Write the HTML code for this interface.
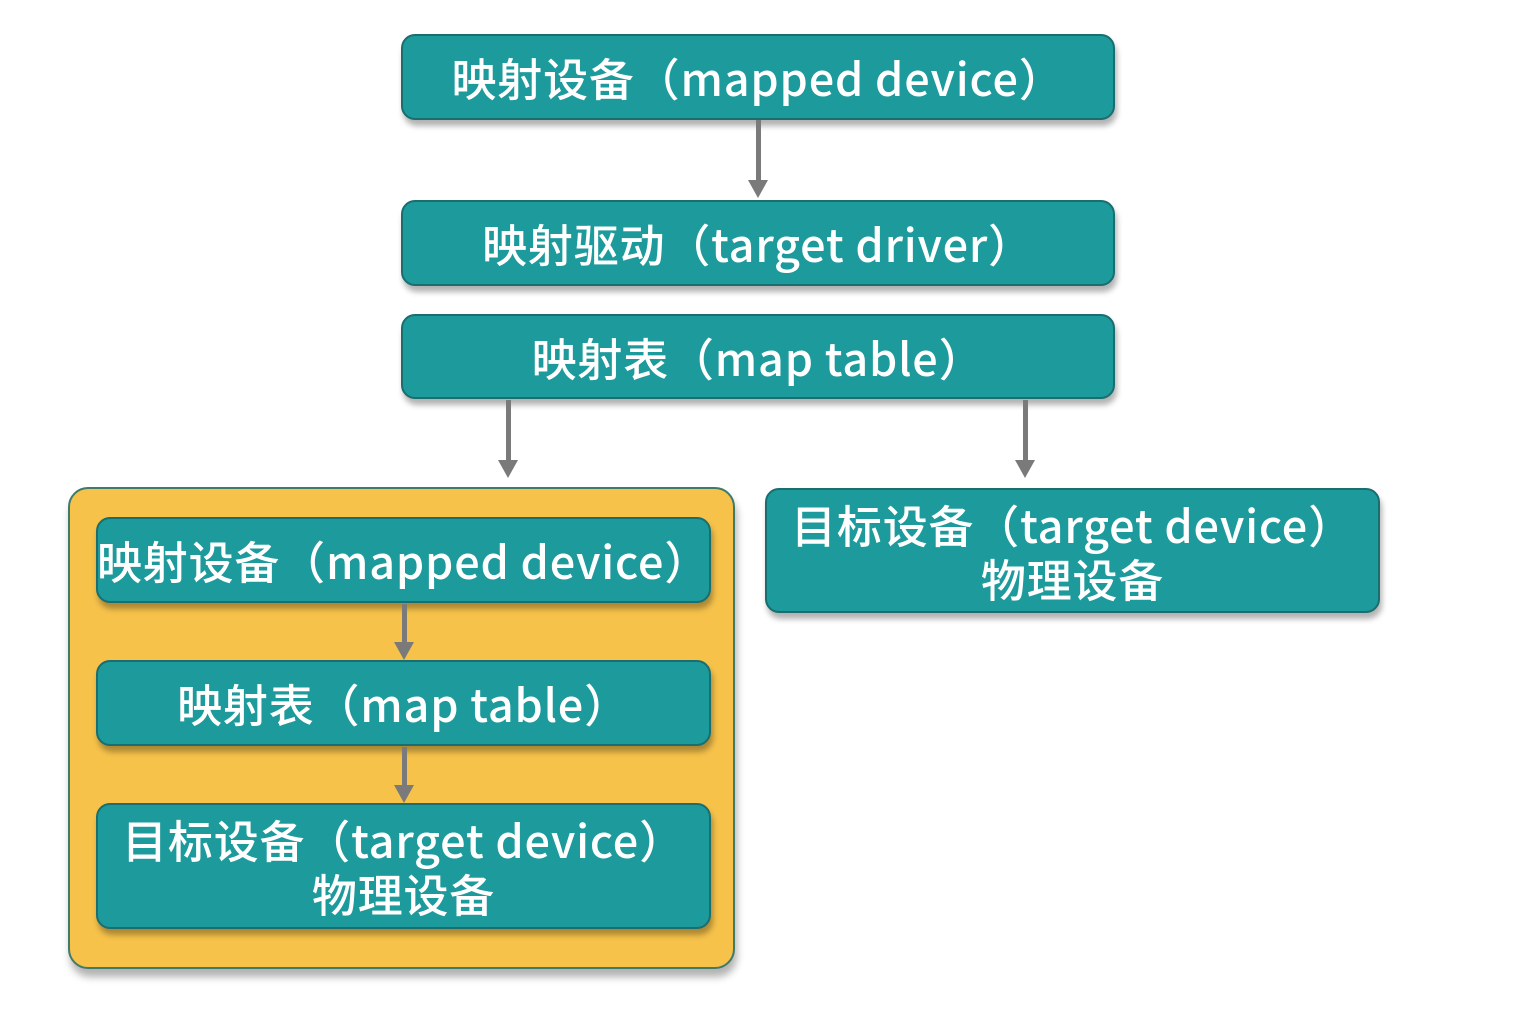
<!DOCTYPE html>
<html><head><meta charset="utf-8"><style>
body{margin:0;width:1523px;height:1009px;background:#fff;position:relative;overflow:hidden;font-family:"Noto Sans CJK SC","Liberation Sans",sans-serif;}
.b{position:absolute;background:#1d9a9c;border:2px solid #1a6e6f;border-radius:14px;box-sizing:border-box;color:#fff;font-size:45px;font-weight:500;display:flex;align-items:center;justify-content:center;text-align:center;line-height:54px;box-shadow:2px 6px 6px rgba(0,0,0,0.3);white-space:nowrap;letter-spacing:0.8px}
.y{position:absolute;left:68px;top:487px;width:667px;height:482px;background:#f6c24a;border:2px solid #3f7a6a;border-radius:20px;box-sizing:border-box;box-shadow:2px 8px 8px rgba(0,0,0,0.3)}
.a{position:absolute;width:5px;background:#7a7a7a}
.h{position:absolute;width:0;height:0;border-left:10px solid transparent;border-right:10px solid transparent;border-top:18px solid #7a7a7a}
</style></head><body>
<div class="b" style="left:401px;top:34px;width:714px;height:86px">映射设备（mapped device）</div>
<div class="b" style="left:401px;top:200px;width:714px;height:86px">映射驱动（target driver）</div>
<div class="b" style="left:401px;top:314px;width:714px;height:85px">映射表（map table）</div>
<div class="a" style="left:756px;top:120px;height:62px"></div><div class="h" style="left:748px;top:180px"></div>
<div class="a" style="left:506px;top:400px;height:60px"></div><div class="h" style="left:498px;top:460px"></div>
<div class="a" style="left:1023px;top:400px;height:60px"></div><div class="h" style="left:1015px;top:460px"></div>
<div class="y"></div>
<div class="b" style="left:96px;top:517px;width:615px;height:86px">映射设备（mapped device）</div>
<div class="b" style="left:96px;top:660px;width:615px;height:86px">映射表（map table）</div>
<div class="b" style="left:96px;top:803px;width:615px;height:126px">目标设备（target device）<br>物理设备</div>
<div class="b" style="left:765px;top:488px;width:615px;height:125px">目标设备（target device）<br>物理设备</div>
<div class="a" style="left:402px;top:604px;height:40px"></div><div class="h" style="left:394px;top:642px"></div>
<div class="a" style="left:402px;top:747px;height:40px"></div><div class="h" style="left:394px;top:785px"></div>
</body></html>
